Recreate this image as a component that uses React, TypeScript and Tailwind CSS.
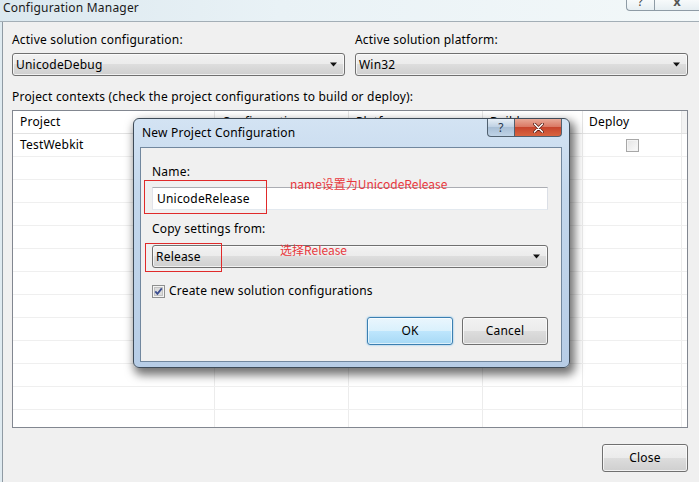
import React from "react";

const rowCols = "grid grid-cols-[202px_134px_134px_100px_99px_1fr]";

function Arrow() {
  return (
    <svg width="8" height="5" viewBox="0 0 8 5" className="block">
      <path d="M0 0.5 L7 0.5 L3.5 4.5 Z" fill="#111" />
    </svg>
  );
}

function Combo({ text }: { text: string }) {
  return (
    <div className="flex h-[23px] items-center rounded-[3px] border border-[#707070] bg-[linear-gradient(to_bottom,#f2f2f2_0%,#ebebeb_50%,#dddddd_50%,#cfcfcf_100%)] pl-[3px] pr-[6px] shadow-[inset_0_0_0_1px_rgba(255,255,255,0.7)]">
      <span className="flex-1">{text}</span>
      <Arrow />
    </div>
  );
}

function GridRow({ first, deploy }: { first?: string; deploy?: boolean }) {
  return (
    <div className={`${rowCols} h-[23px] shrink-0 border-b border-[#efefef]`}>
      <div className="flex items-center border-r border-[#ececec] pl-[7px]">{first}</div>
      <div className="border-r border-[#ececec]" />
      <div className="border-r border-[#ececec]" />
      <div className="border-r border-[#ececec]" />
      <div className="flex items-center justify-center border-r border-[#ececec]">
        {deploy && (
          <div className="h-[13px] w-[13px] border border-[#a7a7a7] bg-[linear-gradient(to_bottom_right,#e4e4e4,#fbfbfb)] shadow-[inset_0_0_0_1px_#f4f4f4]" />
        )}
      </div>
      <div />
    </div>
  );
}

export default function App() {
  const rows = Array.from({ length: 12 });
  return (
    <div className="relative h-[482px] w-[699px] overflow-hidden bg-[#f0f0f0] font-['Noto_Sans',sans-serif] text-[12px] leading-[16px] tracking-[0.2px] text-black">
      {/* title bar */}
      <div className="flex h-[22px] items-start border-b border-[#a3aeb6] bg-[linear-gradient(to_right,#dbe8ef,#e9f2f6_40%,#f3f8f9)]">
        <span className="pl-[3px] text-[12px] leading-[16px] text-[#1a1a1a]">Configuration Manager</span>
        <div className="ml-auto flex h-[11px]">
          <div className="flex h-[11px] w-[28px] justify-center overflow-hidden rounded-bl-[4px] border-b border-l border-[#8e9ba5] bg-[linear-gradient(to_bottom,#f7fafb,#e6eef2)]">
            <span className="-mt-[6px] text-[12px] leading-[16px] text-[#444]">?</span>
          </div>
          <div className="flex h-[11px] w-[45px] justify-center overflow-hidden border-b border-l border-[#8e9ba5] bg-[linear-gradient(to_bottom,#f7fafb,#e6eef2)]">
            <span className="-mt-[7px] text-[13px] font-bold leading-[16px] text-[#555]">x</span>
          </div>
        </div>
      </div>

      <div className="flex h-[460px]">
        <div className="w-[3px] border-r border-[#8f9aa3] bg-[#dfeaf0]" />
        <div className="flex flex-1 flex-col pl-[9px] pr-[11px] pt-[10px]">
          <div className="grid grid-cols-2 gap-x-[10px]">
            <div>
              <div className="h-[16px]">Active solution configuration:</div>
              <div className="mt-[5px]">
                <Combo text="UnicodeDebug" />
              </div>
            </div>
            <div>
              <div className="h-[16px]">Active solution platform:</div>
              <div className="mt-[5px]">
                <Combo text="Win32" />
              </div>
            </div>
          </div>

          <div className="mt-[13px] h-[16px]">
            Project contexts (check the project configurations to build or deploy):
          </div>

          <div className="mt-[5px] flex h-[318px] flex-col overflow-hidden border border-[#828790] bg-white">
            <div className={`${rowCols} h-[23px] shrink-0 border-b border-[#e2e2e2]`}>
              <div className="flex items-center border-r border-[#e5e5e5] pl-[7px]">Project</div>
              <div className="flex items-center border-r border-[#e5e5e5] pl-[7px]">Configuration</div>
              <div className="flex items-center border-r border-[#e5e5e5] pl-[7px]">Platform</div>
              <div className="flex items-center border-r border-[#e5e5e5] pl-[7px]">Build</div>
              <div className="flex items-center border-r border-[#e5e5e5] pl-[6px]">Deploy</div>
              <div className="bg-[#f3f3f3]" />
            </div>
            <GridRow first="TestWebkit" deploy />
            {rows.map((_, i) => (
              <GridRow key={i} />
            ))}
          </div>

          <div className="mt-[16px] flex justify-end">
            <div className="flex h-[28px] w-[86px] items-center justify-center rounded-[3px] border border-[#707070] bg-[linear-gradient(to_bottom,#f2f2f2_0%,#ebebeb_50%,#dddddd_50%,#cfcfcf_100%)] shadow-[inset_0_0_0_1px_rgba(255,255,255,0.7)]">
              Close
            </div>
          </div>
        </div>
      </div>

      {/* modal dialog */}
      <div className="absolute left-[133px] top-[118px] flex h-[250px] w-[437px] flex-col rounded-[6px] border border-[#3e4b58] bg-[linear-gradient(to_bottom,#d3e3f3,#c3d7ec_30%,#b7cde6)] shadow-[3px_5px_10px_2px_rgba(0,0,0,0.55)]">
        <div className="flex h-[28px] items-center pl-[8px] text-[12px] text-black">
          New Project Configuration
        </div>
        <div className="absolute right-[7px] top-0 flex h-[18px]">
          <div className="flex w-[28px] items-center justify-center rounded-bl-[4px] border border-t-0 border-[#50606f] bg-[linear-gradient(to_bottom,#e6eef6,#bccfe2_50%,#a9bfd6_50%,#bfd3e6)] text-[12px] leading-none text-[#25374a]">
            ?
          </div>
          <div className="flex w-[47px] items-center justify-center rounded-br-[4px] border border-l-0 border-t-0 border-[#50606f] bg-[linear-gradient(to_bottom,#e8a896,#d9745f_50%,#c7452d_50%,#d8643f)]">
            <svg width="11" height="10" viewBox="0 0 11 10">
              <path d="M1.5 1 L9.5 9 M9.5 1 L1.5 9" stroke="#5a1a10" strokeWidth="3" strokeLinecap="round" />
              <path d="M1.5 1 L9.5 9 M9.5 1 L1.5 9" stroke="#ffffff" strokeWidth="1.6" strokeLinecap="round" />
            </svg>
          </div>
        </div>
        <div className="mb-[5px] ml-[6px] mr-[7px] flex flex-1 flex-col border border-[#71879e] bg-[#f0f0f0] pl-[11px] pr-[13px] pt-[16px]">
          <div className="h-[16px]">Name:</div>
          <div className="mt-[7px] flex h-[23px] items-center border border-[#abadb3] border-b-[#e3e9ef] border-l-[#e2e3ea] border-r-[#dbdfe6] bg-white pl-[4px]">
            UnicodeRelease
          </div>
          <div className="mt-[11px] h-[16px]">Copy settings from:</div>
          <div className="mt-[8px]">
            <Combo text="Release" />
          </div>
          <div className="mt-[15px] flex h-[16px] items-center gap-[4px]">
            <svg width="13" height="13" viewBox="0 0 13 13" className="block">
              <rect x="0.5" y="0.5" width="12" height="12" fill="#f4f4f4" stroke="#8e8f8f" />
              <rect x="2.5" y="2.5" width="8" height="8" fill="#dcdcdc" stroke="#c2c2c2" />
              <path d="M3.3 6.4 L5.4 8.8 L9.8 3.4" fill="none" stroke="#3b4d8f" strokeWidth="1.8" />
            </svg>
            <span>Create new solution configurations</span>
          </div>
          <div className="mt-[18px] flex justify-end gap-[9px]">
            <div className="flex h-[28px] w-[86px] items-center justify-center rounded-[3px] border border-[#3c7fb1] bg-[linear-gradient(to_bottom,#eaf6fd_0%,#d9f0fc_50%,#bee6fd_50%,#a7d9f5_100%)] shadow-[inset_0_0_0_1px_rgba(255,255,255,0.6),0_0_2px_#62b3e8]">
              OK
            </div>
            <div className="flex h-[28px] w-[86px] items-center justify-center rounded-[3px] border border-[#707070] bg-[linear-gradient(to_bottom,#f2f2f2_0%,#ebebeb_50%,#dddddd_50%,#cfcfcf_100%)] shadow-[inset_0_0_0_1px_rgba(255,255,255,0.7)]">
              Cancel
            </div>
          </div>
        </div>
      </div>

      {/* red annotations */}
      <div className="absolute left-[144px] top-[180px] h-[34px] w-[123px] border border-[#e02a2a]" />
      <div className="absolute left-[145px] top-[243px] h-[29px] w-[77px] border border-[#e02a2a]" />
      <div className="absolute left-[290px] top-[176px] font-['Noto_Sans_CJK_SC',sans-serif] text-[12px] leading-[16px] tracking-normal text-[#e8383d]">
        name设置为UnicodeRelease
      </div>
      <div className="absolute left-[280px] top-[242px] font-['Noto_Sans_CJK_SC',sans-serif] text-[12px] leading-[16px] tracking-normal text-[#e8383d]">
        选择Release
      </div>
    </div>
  );
}
